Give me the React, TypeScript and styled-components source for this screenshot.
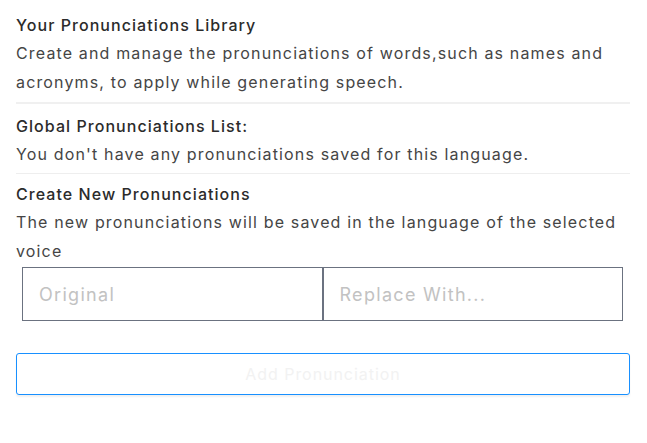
import React, { FC } from "react";
import styled, { createGlobalStyle } from "styled-components";

const GlobalStyle = createGlobalStyle`
  html, body {
    margin: 0;
    padding: 0;
    background: #ffffff;
  }
  body {
    font-family: Inter, "Noto Sans", sans-serif;
  }
`;

const Panel = styled.div`
  width: 614px;
  padding: 11px 17px 0 16px;
  color: #333333;
`;

const Section = styled.section<{ $divider?: "thick" | "thin"; $top?: number }>`
  padding-top: ${(p) => p.$top ?? 0}px;
  padding-bottom: ${(p) => (p.$divider === "thick" ? 5 : 4)}px;
  border-bottom: ${(p) =>
    p.$divider === "thick"
      ? "2px solid #f0f0f0"
      : p.$divider === "thin"
      ? "1px solid #eeeeee"
      : "none"};
`;

const Title = styled.div`
  font-size: 16px;
  font-weight: 500;
  line-height: 28px;
  letter-spacing: 1.05px;
  color: #2b2b2b;
`;

const Text = styled.p`
  margin: 0;
  font-size: 16px;
  line-height: 29px;
  letter-spacing: 1.15px;
  color: #454545;
`;

const InputRow = styled.div`
  display: flex;
  margin: 1px 7px 0 6px;
`;

const Field = styled.input`
  flex: 1;
  min-width: 0;
  height: 54px;
  box-sizing: border-box;
  border: 1px solid #6b7280;
  border-radius: 0;
  padding: 0 16px;
  font-family: Inter, "Noto Sans", sans-serif;
  font-size: 18px;
  letter-spacing: 1.3px;
  color: #333333;
  outline: none;
  &::placeholder {
    color: #c2c2c2;
  }
`;

const AddButton = styled.button`
  display: block;
  width: 100%;
  height: 42px;
  margin-top: 32px;
  border: 1px solid #1890ff;
  border-radius: 3px;
  background: #ffffff;
  box-shadow: 0 2px 2px rgba(0, 0, 0, 0.06);
  font-family: Inter, "Noto Sans", sans-serif;
  font-size: 16px;
  letter-spacing: 0.95px;
  color: #f2f2f2;
  cursor: not-allowed;
`;

const App: FC = () => {
  return (
    <>
      <GlobalStyle />
      <Panel>
        <Section $divider="thick">
          <Title>Your Pronunciations Library</Title>
          <Text>
            Create and manage the pronunciations of words,such as names and
            acronyms, to apply while generating speech.
          </Text>
        </Section>
        <Section $divider="thin" $top={8}>
          <Title>Global Pronunciations List:</Title>
          <Text>You don't have any pronunciations saved for this language.</Text>
        </Section>
        <Section $top={6}>
          <Title>Create New Pronunciations</Title>
          <Text>
            The new pronunciations will be saved in the language of the selected
            voice
          </Text>
          <InputRow>
            <Field placeholder="Original" />
            <Field placeholder="Replace With..." />
          </InputRow>
          <AddButton disabled>Add Pronunciation</AddButton>
        </Section>
      </Panel>
    </>
  );
};

export default App;
